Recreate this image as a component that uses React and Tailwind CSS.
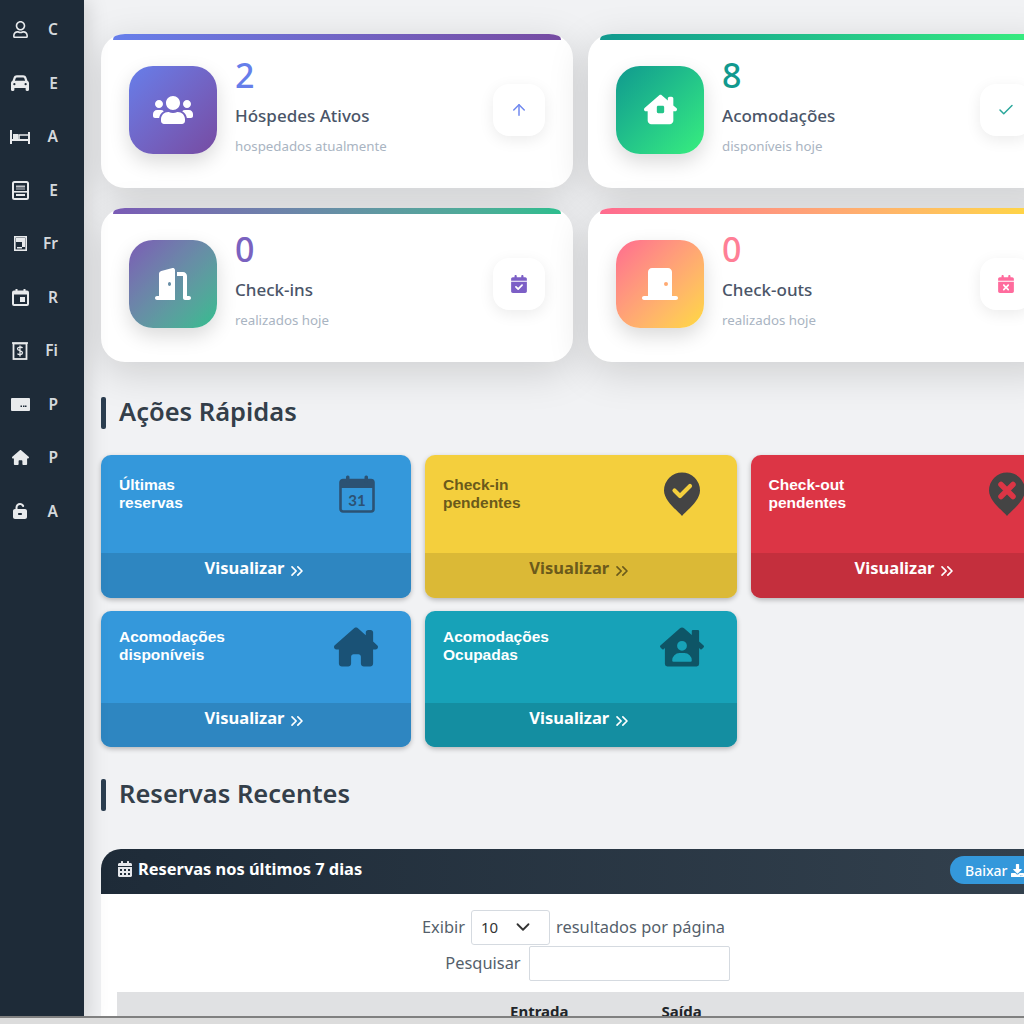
import React from "react";
import { FaRegUser, FaUsers, FaCalendarAlt, FaDownload, FaHouseUser } from "react-icons/fa";
import {
  FaCar, FaHouse, FaUnlockKeyhole, FaHouseChimneyWindow, FaDoorOpen, FaDoorClosed,
  FaCalendarCheck, FaCalendarXmark, FaHouseChimney,
} from "react-icons/fa6";
import { LuChevronsRight, LuChevronDown, LuArrowUp, LuCheck } from "react-icons/lu";

const BedIcon = () => (
  <svg viewBox="0 0 20 14" className="w-[20px] h-[14px]" fill="none" stroke="currentColor" strokeWidth="2">
    <path d="M1 0v14M19 2v12M1 10h18" />
    <rect x="3" y="4" width="5" height="5" fill="currentColor" stroke="none" />
    <path d="M9 9V5h9" strokeWidth="1.6" />
  </svg>
);

const RegisterIcon = () => (
  <svg viewBox="0 0 17 19" className="w-[17px] h-[19px]">
    <rect x="1" y="1" width="15" height="17" rx="1.5" fill="none" stroke="currentColor" strokeWidth="2" />
    <path d="M4 4.5h9v2H4zM4 7.5h9v1H4z" fill="currentColor" opacity="0.8" />
    <rect x="1" y="10" width="15" height="1.6" fill="currentColor" />
    <rect x="4" y="13" width="9" height="2" fill="currentColor" />
  </svg>
);

const DocIcon = () => (
  <svg viewBox="0 0 13 15" className="w-[13px] h-[15px]">
    <rect x="0.8" y="0.8" width="11.4" height="13.4" fill="none" stroke="currentColor" strokeWidth="1.6" />
    <rect x="2" y="2" width="9" height="4" fill="currentColor" />
    <rect x="8" y="6" width="3" height="5" fill="currentColor" />
    <rect x="3" y="11" width="5" height="1.5" fill="currentColor" />
  </svg>
);

const CalBoxIcon = () => (
  <svg viewBox="0 0 17 17" className="w-[17px] h-[17px]">
    <rect x="1" y="2.5" width="15" height="13.5" rx="1" fill="none" stroke="currentColor" strokeWidth="2" />
    <rect x="1" y="2.5" width="15" height="3" fill="currentColor" />
    <rect x="3.5" y="0" width="2" height="3" fill="currentColor" />
    <rect x="11.5" y="0" width="2" height="3" fill="currentColor" />
    <rect x="8" y="8" width="5" height="5" fill="currentColor" />
  </svg>
);

const BillBoxIcon = () => (
  <svg viewBox="0 0 16 18" className="w-[16px] h-[18px]" fill="none" stroke="currentColor">
    <rect x="1.5" y="1.5" width="13" height="15.5" strokeWidth="1.8" />
    <path d="M0 1h16" strokeWidth="1.6" />
    <path d="M10.5 6c-1-1.4-5-1.4-5 .8s5 1.6 5 4c0 2.2-4 2.2-5 .8M8 3.5v11" strokeWidth="1.3" />
  </svg>
);

const CardIcon = () => (
  <svg viewBox="0 0 19 13" className="w-[19px] h-[13px]">
    <rect width="19" height="13" rx="1" fill="currentColor" />
    <rect x="9.5" y="7.5" width="1.5" height="1.5" fill="#1e2b38" />
    <rect x="12" y="7.5" width="1.5" height="1.5" fill="#1e2b38" />
    <rect x="14" y="7.5" width="1.5" height="1.5" fill="#1e2b38" />
  </svg>
);

const menu = [
  { id: "clientes", icon: <FaRegUser className="text-[17px]" />, label: "C" },
  { id: "estacionamento", icon: <FaCar className="text-[18px]" />, label: "E" },
  { id: "acomodacoes", icon: <BedIcon />, label: "A" },
  { id: "estoque", icon: <RegisterIcon />, label: "E" },
  { id: "frigobar", icon: <DocIcon />, label: "Fr" },
  { id: "reservas", icon: <CalBoxIcon />, label: "R" },
  { id: "financeiro", icon: <BillBoxIcon />, label: "Fi" },
  { id: "pagamentos", icon: <CardIcon />, label: "P" },
  { id: "pagina", icon: <FaHouse className="text-[17px]" />, label: "P" },
  { id: "acesso", icon: <FaUnlockKeyhole className="text-[16px]" />, label: "A" },
];

const stats = [
  {
    value: "2", title: "Hóspedes Ativos", sub: "hospedados atualmente",
    icon: <FaUsers className="text-[40px]" />, side: <LuArrowUp className="text-[18px]" />,
    bar: "from-[#667eea] to-[#764ba2]", valueColor: "text-[#667eea]", sideColor: "text-[#7189ef]",
  },
  {
    value: "8", title: "Acomodações", sub: "disponíveis hoje",
    icon: <FaHouseChimneyWindow className="text-[33px]" />, side: <LuCheck className="text-[18px]" />,
    bar: "from-[#11998e] to-[#38ef7d]", valueColor: "text-[#11998e]", sideColor: "text-[#2aa79b]",
  },
  {
    value: "0", title: "Check-ins", sub: "realizados hoje",
    icon: <FaDoorOpen className="text-[36px]" />, side: <FaCalendarCheck className="text-[18px]" />,
    bar: "from-[#7a5bb5] to-[#2dbd8e]", valueColor: "text-[#7a62c0]", sideColor: "text-[#7c5fc6]",
  },
  {
    value: "0", title: "Check-outs", sub: "realizados hoje",
    icon: <FaDoorClosed className="text-[36px]" />, side: <FaCalendarXmark className="text-[18px]" />,
    bar: "from-[#ff6b8f] to-[#ffd93d]", valueColor: "text-[#ff7f96]", sideColor: "text-[#ff6b9d]",
  },
];

const CalendarIcon = () => (
  <svg viewBox="0 0 36 38" className="w-[36px] h-[38px]">
    <rect x="1.5" y="5" width="33" height="31.5" rx="2.5" fill="none" stroke="#2c5273" strokeWidth="2.6" />
    <path d="M1.5 7.5a2.5 2.5 0 0 1 2.5-2.5h28a2.5 2.5 0 0 1 2.5 2.5V13h-33z" fill="#2c5273" />
    <rect x="7" y="0.5" width="3.5" height="7" rx="1.5" fill="#2c5273" />
    <rect x="25.5" y="0.5" width="3.5" height="7" rx="1.5" fill="#2c5273" />
    <text x="18" y="30.5" textAnchor="middle" fontSize="15" fontWeight="700" fill="#2c5273" fontFamily="Lato, sans-serif">31</text>
  </svg>
);

const PinCheck = () => (
  <svg viewBox="0 0 38 44" className="w-[38px] h-[44px]">
    <path d="M19 44C15 39 1 29 1 18.5a18 18 0 0 1 36 0C37 29 23 39 19 44z" fill="#444444" />
    <path d="M11.5 18.5l5.5 5.5 10-10" fill="none" stroke="#f4cf3d" strokeWidth="4.2" strokeLinecap="round" strokeLinejoin="round" />
  </svg>
);

const PinX = () => (
  <svg viewBox="0 0 38 44" className="w-[38px] h-[44px]">
    <path d="M19 44C15 39 1 29 1 18.5a18 18 0 0 1 36 0C37 29 23 39 19 44z" fill="#444444" />
    <path d="M13 12.5l12 12M25 12.5l-12 12" fill="none" stroke="#dc3545" strokeWidth="5.5" strokeLinecap="round" />
  </svg>
);

const StatCard = ({ value, title, sub, icon, side, bar, valueColor, sideColor }) => (
  <div className="relative h-[154px] rounded-[24px] bg-white shadow-[0_10px_40px_rgba(0,0,0,0.15)] flex items-center pl-[28px] pr-[28px] pb-[3px] overflow-hidden">
    <div className={`absolute top-0 left-[12px] right-[12px] h-[6px] rounded-t-[6px] bg-gradient-to-r ${bar}`} />
    <div className={`w-[88px] h-[88px] shrink-0 rounded-[24px] bg-gradient-to-br ${bar} flex items-center justify-center text-white shadow-[0_8px_20px_rgba(0,0,0,0.15)]`}>
      {icon}
    </div>
    <div className="ml-[18px] flex-1 self-start pt-[21px]">
      <div className={`text-[34px] leading-[40px] font-medium ${valueColor}`}>{value}</div>
      <div className="mt-[10px] text-[17px] leading-[22px] font-medium text-[#4a5568]">{title}</div>
      <div className="mt-[10px] text-[13.3px] leading-[18px] text-[#a9b4c2]">{sub}</div>
    </div>
    <div className={`w-[52px] h-[52px] rounded-[16px] bg-white shadow-[0_4px_15px_rgba(0,0,0,0.08)] flex items-center justify-center ${sideColor}`}>
      {side}
    </div>
  </div>
);

const QuickCard = ({ lines, icon, bg, foot, text = "text-white", height, top, footHeight }) => (
  <div className={`rounded-[10px] overflow-hidden flex flex-col shadow-[0_2px_5px_rgba(0,0,0,0.25)] ${bg} ${height}`}>
    <div className={`flex-1 flex justify-between pl-[18px] pr-[36px] ${top} ${text}`}>
      <div className="font-['Liberation_Sans',sans-serif] text-[15.5px] leading-[18px] font-bold">
        {lines.map(l => <div key={l}>{l}</div>)}
      </div>
      <div className="-mt-[1px]">{icon}</div>
    </div>
    <div className={`${footHeight} flex items-start justify-center gap-[3px] pt-[5px] text-[16.5px] leading-[20px] font-bold ${foot} ${text}`}>
      Visualizar <LuChevronsRight className="text-[20px] mt-[3px]" />
    </div>
  </div>
);

const SectionTitle = ({ children, className }) => (
  <div className={`flex items-center gap-[13px] ${className}`}>
    <div className="w-[5px] h-[32px] rounded-[2px] bg-[#2c3e50] mt-[3px]" />
    <h2 className="text-[25.5px] leading-[32px] font-semibold text-[#343f4a]">{children}</h2>
  </div>
);

export default function App() {
  return (
    <div className="relative w-[1024px] h-[1024px] overflow-hidden flex bg-[#f1f2f4] font-['Noto_Sans','Open_Sans',sans-serif]">
      {/* Sidebar */}
      <aside className="w-[84px] shrink-0 bg-[#1e2b38] pt-[3px] z-10 shadow-[4px_0_20px_rgba(0,0,0,0.14)]">
        {menu.map(({ id, icon, label }) => (
          <div key={id} className="h-[53.5px] flex items-center text-[#e8eaec]">
            <div className="w-[40px] flex justify-center">{icon}</div>
            <div className="w-[18px] text-right text-[15.5px] font-semibold text-[#d5d9dd]">{label}</div>
          </div>
        ))}
      </aside>

      {/* Main */}
      <main className="pl-[17px] pt-[34px] w-[1200px] shrink-0">
        <div className="grid grid-cols-[472px_472px] gap-x-[15px] gap-y-[20px]">
          {stats.map(s => <StatCard key={s.title} {...s} />)}
        </div>

        <SectionTitle className="mt-[31.5px]">Ações Rápidas</SectionTitle>

        <div className="mt-[26.5px] grid grid-cols-[310px_311.5px_311px] gap-x-[14px] gap-y-[13px]">
          <QuickCard lines={["Últimas", "reservas"]} icon={<CalendarIcon />} bg="bg-[#3498db]" foot="bg-[#2e86c1]" height="h-[143px]" top="pt-[21px]" footHeight="h-[45px]" />
          <QuickCard lines={["Check-in", "pendentes"]} icon={<div className="-mt-[3px]"><PinCheck /></div>} bg="bg-[#f4cf3d]" foot="bg-[#dbb936]" text="text-[#6b5a1b]" height="h-[143px]" top="pt-[21px]" footHeight="h-[45px]" />
          <QuickCard lines={["Check-out", "pendentes"]} icon={<div className="-mt-[3px]"><PinX /></div>} bg="bg-[#dc3545]" foot="bg-[#c42f3d]" height="h-[143px]" top="pt-[21px]" footHeight="h-[45px]" />
          <QuickCard lines={["Acomodações", "disponíveis"]} icon={<FaHouseChimney className="text-[40px] w-[44px] -mr-[3px] text-[#1a5276]" />} bg="bg-[#3498db]" foot="bg-[#2e86c1]" height="h-[136px]" top="pt-[17px]" footHeight="h-[44px]" />
          <QuickCard lines={["Acomodações", "Ocupadas"]} icon={<FaHouseUser className="text-[40px] w-[44px] -mr-[3px] text-[#0e5566]" />} bg="bg-[#17a2b8]" foot="bg-[#148ea1]" height="h-[136px]" top="pt-[17px]" footHeight="h-[44px]" />
        </div>

        <SectionTitle className="mt-[28.5px]">Reservas Recentes</SectionTitle>

        {/* Table card */}
        <div className="mt-[38.5px] bg-white rounded-t-[20px] overflow-hidden w-[1000px] h-[200px]">
          <div className="h-[45px] bg-gradient-to-r from-[#1e2b38] to-[#34424f] flex items-center justify-between pl-[16px] pr-[28px] text-white">
            <div className="flex items-center gap-[5px] text-[16.4px] font-bold -mt-[5px]">
              <FaCalendarAlt className="text-[16px] text-[#e5e7eb]" /> Reservas nos últimos 7 dias
            </div>
            <div className="h-[28px] w-[123px] rounded-full bg-[#3498db] flex items-center pl-[15px] gap-[4px] text-[14px] font-medium -mt-[3px]">
              Baixar <FaDownload className="text-[13px]" />
            </div>
          </div>
          <div className="w-[1024px] pt-[15px] flex flex-col items-center text-[16.4px] text-[#555f6b] pr-[79px]">
            <div className="flex items-center gap-[6px] h-[36px]">
              <span>Exibir</span>
              <div className="w-[79px] h-[35px] border border-[#d5dae0] rounded-[3px] flex items-center justify-between pl-[9px] pr-[15px] text-[15px] text-[#333]">
                10 <LuChevronDown className="text-[22px]" />
              </div>
              <span>resultados por página</span>
            </div>
            <div className="flex items-center gap-[8px] mt-[1px] ml-[28px]">
              <span>Pesquisar</span>
              <div className="w-[201px] h-[35px] border border-[#d5dae0] rounded-[2px]" />
            </div>
          </div>
          <div className="ml-[16px] mt-[11px] h-[40px] w-[950px] bg-[#e0e1e3] flex text-[15px] font-bold text-[#212529] pt-[8px]">
            <span className="ml-[393px]">Entrada</span>
            <span className="ml-[93px]">Saída</span>
          </div>
        </div>
      </main>

      {/* Browser edge */}
      <div className="absolute left-0 right-0 bottom-0 h-[8px] z-20 bg-[#dcdcdc] border-t-2 border-[#808080]" />
    </div>
  );
}
